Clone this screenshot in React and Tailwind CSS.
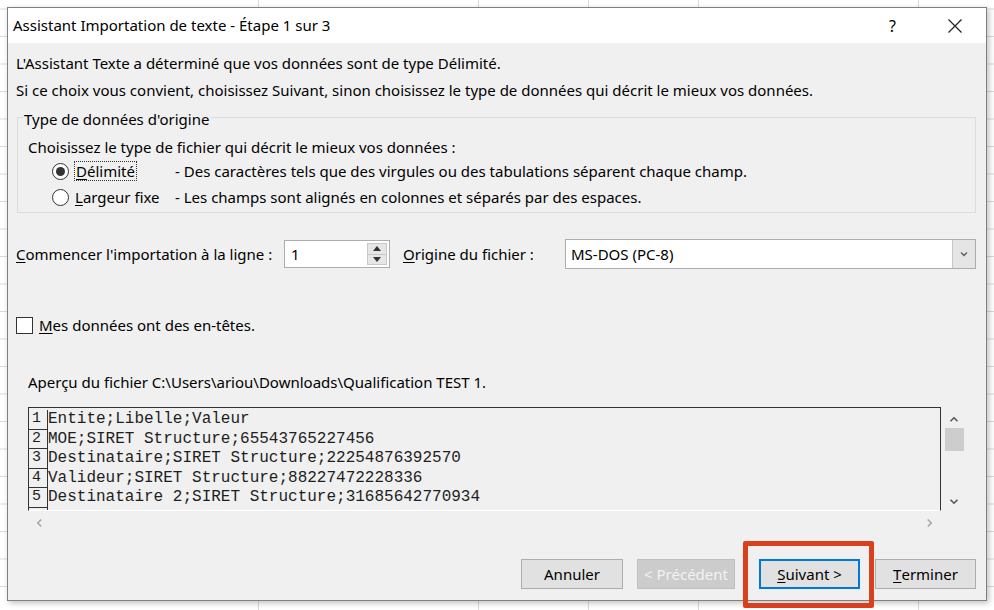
import React from "react";

const F = "font-['Noto_Sans',sans-serif]";

function U({ children }) {
  return <span className="underline underline-offset-2 decoration-1">{children}</span>;
}

function Radio({ checked }) {
  return (
    <span className="flex h-[17px] w-[17px] items-center justify-center rounded-full border border-[#333] bg-white">
      {checked && <span className="h-[9px] w-[9px] rounded-full bg-[#333]" />}
    </span>
  );
}

function Chevron({ dir, className }) {
  const d = {
    up: "M1 6 L5 2 L9 6",
    down: "M1 2 L5 6 L9 2",
    left: "M6 1 L2 5 L6 9",
    right: "M2 1 L6 5 L2 9",
  }[dir];
  const vb = dir === "up" || dir === "down" ? "0 0 10 8" : "0 0 8 10";
  return (
    <svg viewBox={vb} className={className} fill="none" stroke="currentColor" strokeWidth="1.8">
      <path d={d} />
    </svg>
  );
}

const rows = [
  "Entite;Libelle;Valeur",
  "MOE;SIRET Structure;65543765227456",
  "Destinataire;SIRET Structure;22254876392570",
  "Valideur;SIRET Structure;88227472228336",
  "Destinataire 2;SIRET Structure;31685642770934",
];

function Btn({ children, className = "" }) {
  return (
    <div
      className={`flex h-[30px] items-center justify-center border text-[15px] ${className}`}
    >
      {children}
    </div>
  );
}

export default function App() {
  return (
    <div
      className={`relative h-[610px] w-[994px] overflow-hidden bg-white bg-[linear-gradient(to_right,#dadada_1px,transparent_1px),linear-gradient(to_bottom,#dadada_1px,transparent_1px)] bg-[size:110px_27.5px] bg-[position:38px_8.5px] ${F} text-black`}
    >
      <div className="ml-[7px] mt-[7px] flex h-[594px] w-[980px] flex-col border border-[#808080] bg-[#f0f0f0] shadow-[2px_2px_6px_rgba(0,0,0,0.25)]">
        {/* title bar */}
        <div className="flex h-[35px] items-center bg-white pl-[5px] pr-[24px] text-[15px]">
          <span className="flex-1">Assistant Importation de texte - Étape 1 sur 3</span>
          <span className="mr-[52px] text-[16px]">?</span>
          <svg viewBox="0 0 14 14" className="h-[14px] w-[14px]" stroke="#222" strokeWidth="1.2">
            <path d="M0.5 0.5 L13.5 13.5 M13.5 0.5 L0.5 13.5" />
          </svg>
        </div>

        {/* body */}
        <div className="flex flex-1 flex-col pl-[8px] pr-[9px] text-[15px] leading-[20px]">
          <div className="mt-[10px]">L'Assistant Texte a déterminé que vos données sont de type Délimité.</div>
          <div className="mt-[7px]">Si ce choix vous convient, choisissez Suivant, sinon choisissez le type de données qui décrit le mieux vos données.</div>

          {/* group box */}
          <div className="ml-[1px] mr-[1px] mt-[17px] flex h-[96px] flex-col border border-[#dcdcdc] pl-[10px]">
            <div className="-ml-[5px] -mt-[9px] self-start bg-[#f0f0f0] pl-[1px] pr-[2px]">Type de données d'origine</div>
            <div className="mt-[8px]">Choisissez le type de fichier qui décrit le mieux vos données :</div>
            <div className="mt-[3px] flex h-[22px] items-center">
              <span className="ml-[24px]"><Radio checked /></span>
              <span className="ml-[5px] w-[101px]">
                <span className="inline-block h-[20px] border border-dotted border-[#333] px-[1px] leading-[18px]">
                  <U>D</U>élimité
                </span>
              </span>
              <span>- Des caractères tels que des virgules ou des tabulations séparent chaque champ.</span>
            </div>
            <div className="mt-[4px] flex h-[22px] items-center">
              <span className="ml-[24px]"><Radio /></span>
              <span className="ml-[6px] w-[100px]">
                <U>L</U>argeur fixe
              </span>
              <span>- Les champs sont alignés en colonnes et séparés par des espaces.</span>
            </div>
          </div>

          {/* start row */}
          <div className="mt-[26px] flex h-[30px] items-center">
            <span className="w-[268px]">
              <U>C</U>ommencer l'importation à la ligne :
            </span>
            <div className="flex h-[28px] w-[106px] border border-[#adadad] bg-white">
              <span className="flex-1 pl-[6px] leading-[26px]">1</span>
              <div className="my-[2px] mr-[2px] flex w-[20px] flex-col border border-[#c8c8c8] bg-[#e6e6e6]">
                <div className="flex flex-1 items-center justify-center border-b border-[#c8c8c8]">
                  <svg viewBox="0 0 8 5" className="h-[5px] w-[8px]"><path d="M0 5 L4 0 L8 5 Z" fill="#333" /></svg>
                </div>
                <div className="flex flex-1 items-center justify-center">
                  <svg viewBox="0 0 8 5" className="h-[5px] w-[8px]"><path d="M0 0 L4 5 L8 0 Z" fill="#333" /></svg>
                </div>
              </div>
            </div>
            <span className="ml-[13px] w-[162px]">
              <U>O</U>rigine du fichier :
            </span>
            <div className="flex h-[30px] w-[411px] border border-[#adadad] bg-white">
              <span className="flex-1 pl-[5px] leading-[28px]">MS-DOS (PC-8)</span>
              <div className="flex w-[23px] items-center justify-center border-l border-[#c8c8c8] bg-[#e5e5e5]">
                <Chevron dir="down" className="h-[6px] w-[10px] text-[#606060]" />
              </div>
            </div>
          </div>

          {/* checkbox */}
          <div className="mt-[46px] flex h-[20px] items-center">
            <span className="h-[17px] w-[17px] border border-[#333] bg-white" />
            <span className="ml-[6px]">
              <U>M</U>es données ont des en-têtes.
            </span>
          </div>

          {/* apercu */}
          <div className="ml-[12px] mt-[37px]">Aperçu du fichier C:\Users\ariou\Downloads\Qualification TEST 1.</div>

          {/* preview */}
          <div className="ml-[12px] mr-[12px] mt-[15px] flex h-[104px]">
            <div className="flex flex-1 flex-col overflow-hidden border-l border-r border-t border-[#333] border-b border-b-white pt-[2px] font-['Liberation_Mono',monospace] text-[16px] leading-[19px] text-[#1e1e1e]">
              {rows.map((r, i) => (
                <div key={i} className="flex h-[19.5px] items-center">
                  <span className="w-[19px] border-b border-r border-[#333] pl-[3px] text-[15px] leading-[18.5px]">
                    {i + 1}
                  </span>
                  <span className="whitespace-pre">{r}</span>
                </div>
              ))}
              <div className="h-[6px] w-[19px] border-r border-[#333]" />
            </div>
            <div className="ml-[2px] flex w-[22px] flex-col items-center">
              <Chevron dir="up" className="mt-[9px] h-[7px] w-[10px] text-[#555]" />
              <div className="mt-[5px] h-[23px] w-[19px] bg-[#cdcdcd]" />
              <div className="flex-1" />
              <Chevron dir="down" className="mb-[6px] h-[7px] w-[10px] text-[#555]" />
            </div>
          </div>
          <div className="ml-[12px] mr-[36px] mt-[7px] flex items-center justify-between px-[8px]">
            <Chevron dir="left" className="h-[10px] w-[7px] text-[#a6a6a6]" />
            <Chevron dir="right" className="h-[10px] w-[7px] text-[#a6a6a6]" />
          </div>

          {/* buttons */}
          <div className="mr-[1px] mt-[31px] flex justify-end">
            <Btn className="w-[102px] border-[#adadad] bg-[#e1e1e1]">Annuler</Btn>
            <Btn className="ml-[14px] w-[98px] border-[#bfbfbf] bg-[#cccccc] text-[#f2f2f2]">&lt; Précédent</Btn>
            <Btn className="ml-[24px] w-[101px] border-2 border-[#0078d7] bg-[#e1e1e1]">
              <U>S</U>uivant &gt;
            </Btn>
            <Btn className="ml-[15px] w-[101px] border-[#adadad] bg-[#e1e1e1]">
              <U>T</U>erminer
            </Btn>
          </div>
        </div>
      </div>

      {/* red highlight overlay */}
      <div className="absolute left-[743px] top-[541px] h-[67px] w-[131px] rounded-[2px] border-[5px] border-[#d9401d]" />
    </div>
  );
}
